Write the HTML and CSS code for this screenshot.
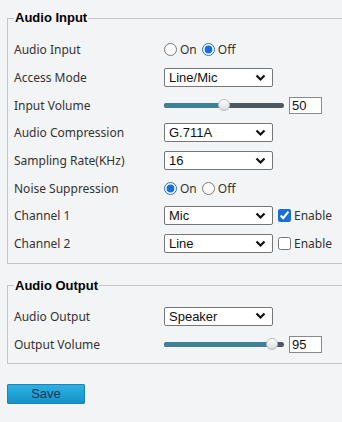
FILE: index.html
```html
<!DOCTYPE html>
<html>
<head>
<meta charset="utf-8">
<link rel="stylesheet" href="styles.css">
</head>
<body>
<div class="page">
  <fieldset class="group">
    <legend>Audio Input</legend>
    <div class="rows">
      <div class="label">Audio Input</div>
      <div class="ctrl">
        <label class="opt"><input type="radio" name="ai"><span>On</span></label>
        <label class="opt"><input type="radio" name="ai" checked><span>Off</span></label>
      </div>
      <div class="label">Access Mode</div>
      <div class="ctrl"><div class="select"><span>Line/Mic</span><svg width="11" height="8" viewBox="0 0 11 8"><path d="M1.5 1.5l4 4 4-4" fill="none" stroke="#111" stroke-width="2.2"/></svg></div></div>
      <div class="label">Input Volume</div>
      <div class="ctrl">
        <div class="slider"><div class="fill" style="width:60px"></div><div class="thumb" style="left:54px"></div></div>
        <div class="num">50</div>
      </div>
      <div class="label">Audio Compression</div>
      <div class="ctrl"><div class="select"><span>G.711A</span><svg width="11" height="8" viewBox="0 0 11 8"><path d="M1.5 1.5l4 4 4-4" fill="none" stroke="#111" stroke-width="2.2"/></svg></div></div>
      <div class="label">Sampling Rate(KHz)</div>
      <div class="ctrl"><div class="select"><span>16</span><svg width="11" height="8" viewBox="0 0 11 8"><path d="M1.5 1.5l4 4 4-4" fill="none" stroke="#111" stroke-width="2.2"/></svg></div></div>
      <div class="label">Noise Suppression</div>
      <div class="ctrl">
        <label class="opt"><input type="radio" name="ns" checked><span>On</span></label>
        <label class="opt"><input type="radio" name="ns"><span>Off</span></label>
      </div>
      <div class="label">Channel 1</div>
      <div class="ctrl">
        <div class="select"><span>Mic</span><svg width="11" height="8" viewBox="0 0 11 8"><path d="M1.5 1.5l4 4 4-4" fill="none" stroke="#111" stroke-width="2.2"/></svg></div>
        <label class="chk"><input type="checkbox" checked><span>Enable</span></label>
      </div>
      <div class="label">Channel 2</div>
      <div class="ctrl">
        <div class="select"><span>Line</span><svg width="11" height="8" viewBox="0 0 11 8"><path d="M1.5 1.5l4 4 4-4" fill="none" stroke="#111" stroke-width="2.2"/></svg></div>
        <label class="chk"><input type="checkbox"><span>Enable</span></label>
      </div>
    </div>
  </fieldset>

  <fieldset class="group out">
    <legend>Audio Output</legend>
    <div class="rows">
      <div class="label">Audio Output</div>
      <div class="ctrl"><div class="select"><span>Speaker</span><svg width="11" height="8" viewBox="0 0 11 8"><path d="M1.5 1.5l4 4 4-4" fill="none" stroke="#111" stroke-width="2.2"/></svg></div></div>
      <div class="label">Output Volume</div>
      <div class="ctrl">
        <div class="slider"><div class="fill" style="width:108px"></div><div class="thumb" style="left:102px"></div></div>
        <div class="num">95</div>
      </div>
    </div>
  </fieldset>

  <button class="save">Save</button>
</div>
</body>
</html>
```

FILE: styles.css
```css
html, body {
  margin: 0;
  padding: 0;
  background: #f3f4f5;
}
.page {
  padding: 10px 0 0 7px;
  font-family: "Noto Sans", "Open Sans", sans-serif;
  font-size: 12px;
  color: #333;
}
.group {
  margin: 0;
  padding: 0;
  border: 1px solid #c3c7cb;
  border-right: 0;
  min-width: 0;
}
.group.out {
  margin-top: 14px;
}
.group legend {
  font-family: "Liberation Sans", Arial, sans-serif;
  font-weight: bold;
  font-size: 13px;
  color: #000;
  margin-left: 6px;
  padding: 0 1px;
  line-height: 16px;
}
.rows {
  display: grid;
  grid-template-columns: 150px auto;
  grid-auto-rows: 27.7px;
  align-items: center;
  padding: 10px 0 5px 6px;
}
.out .rows {
  padding-top: 9px;
}
.label {
  white-space: nowrap;
}
.ctrl {
  display: flex;
  align-items: center;
}
.opt {
  display: flex;
  align-items: center;
  margin-right: 5px;
}
.opt input, .chk input {
  margin: 0 3px 0 0;
  width: 13px;
  height: 13px;
  accent-color: #1a6fd6;
}
.select {
  width: 109px;
  height: 19px;
  box-sizing: border-box;
  border: 1px solid #767676;
  border-radius: 2px;
  background: #fff;
  display: flex;
  align-items: center;
  justify-content: space-between;
  padding: 0 6px 0 4px;
  font-family: "Liberation Sans", Arial, sans-serif;
  font-size: 13px;
  color: #111;
}
.slider {
  position: relative;
  width: 120px;
  height: 5px;
  border-radius: 3px;
  background: #4e5863;
}
.fill {
  height: 5px;
  border-radius: 3px 0 0 3px;
  background: #3e8199;
}
.thumb {
  position: absolute;
  top: -4px;
  width: 12px;
  height: 12px;
  border-radius: 50%;
  box-sizing: border-box;
  border: 1px solid #b8bcc0;
  background: linear-gradient(#ffffff, #d9dcdf);
}
.num {
  margin-left: 5px;
  width: 33px;
  height: 17px;
  box-sizing: border-box;
  border: 1px solid #8a8a8a;
  background: #fff;
  font-family: "Liberation Sans", Arial, sans-serif;
  font-size: 13px;
  line-height: 15px;
  padding-left: 2px;
  color: #111;
}
.chk {
  display: flex;
  align-items: center;
  margin-left: 5px;
}
.save {
  display: block;
  margin-top: 20px;
  width: 78px;
  height: 20px;
  border: 1px solid #1a86b8;
  border-radius: 1px;
  background: linear-gradient(#2fb0e2, #1593c8);
  color: #16365c;
  font-family: "Liberation Sans", Arial, sans-serif;
  font-size: 13px;
  padding: 0;
}
```
